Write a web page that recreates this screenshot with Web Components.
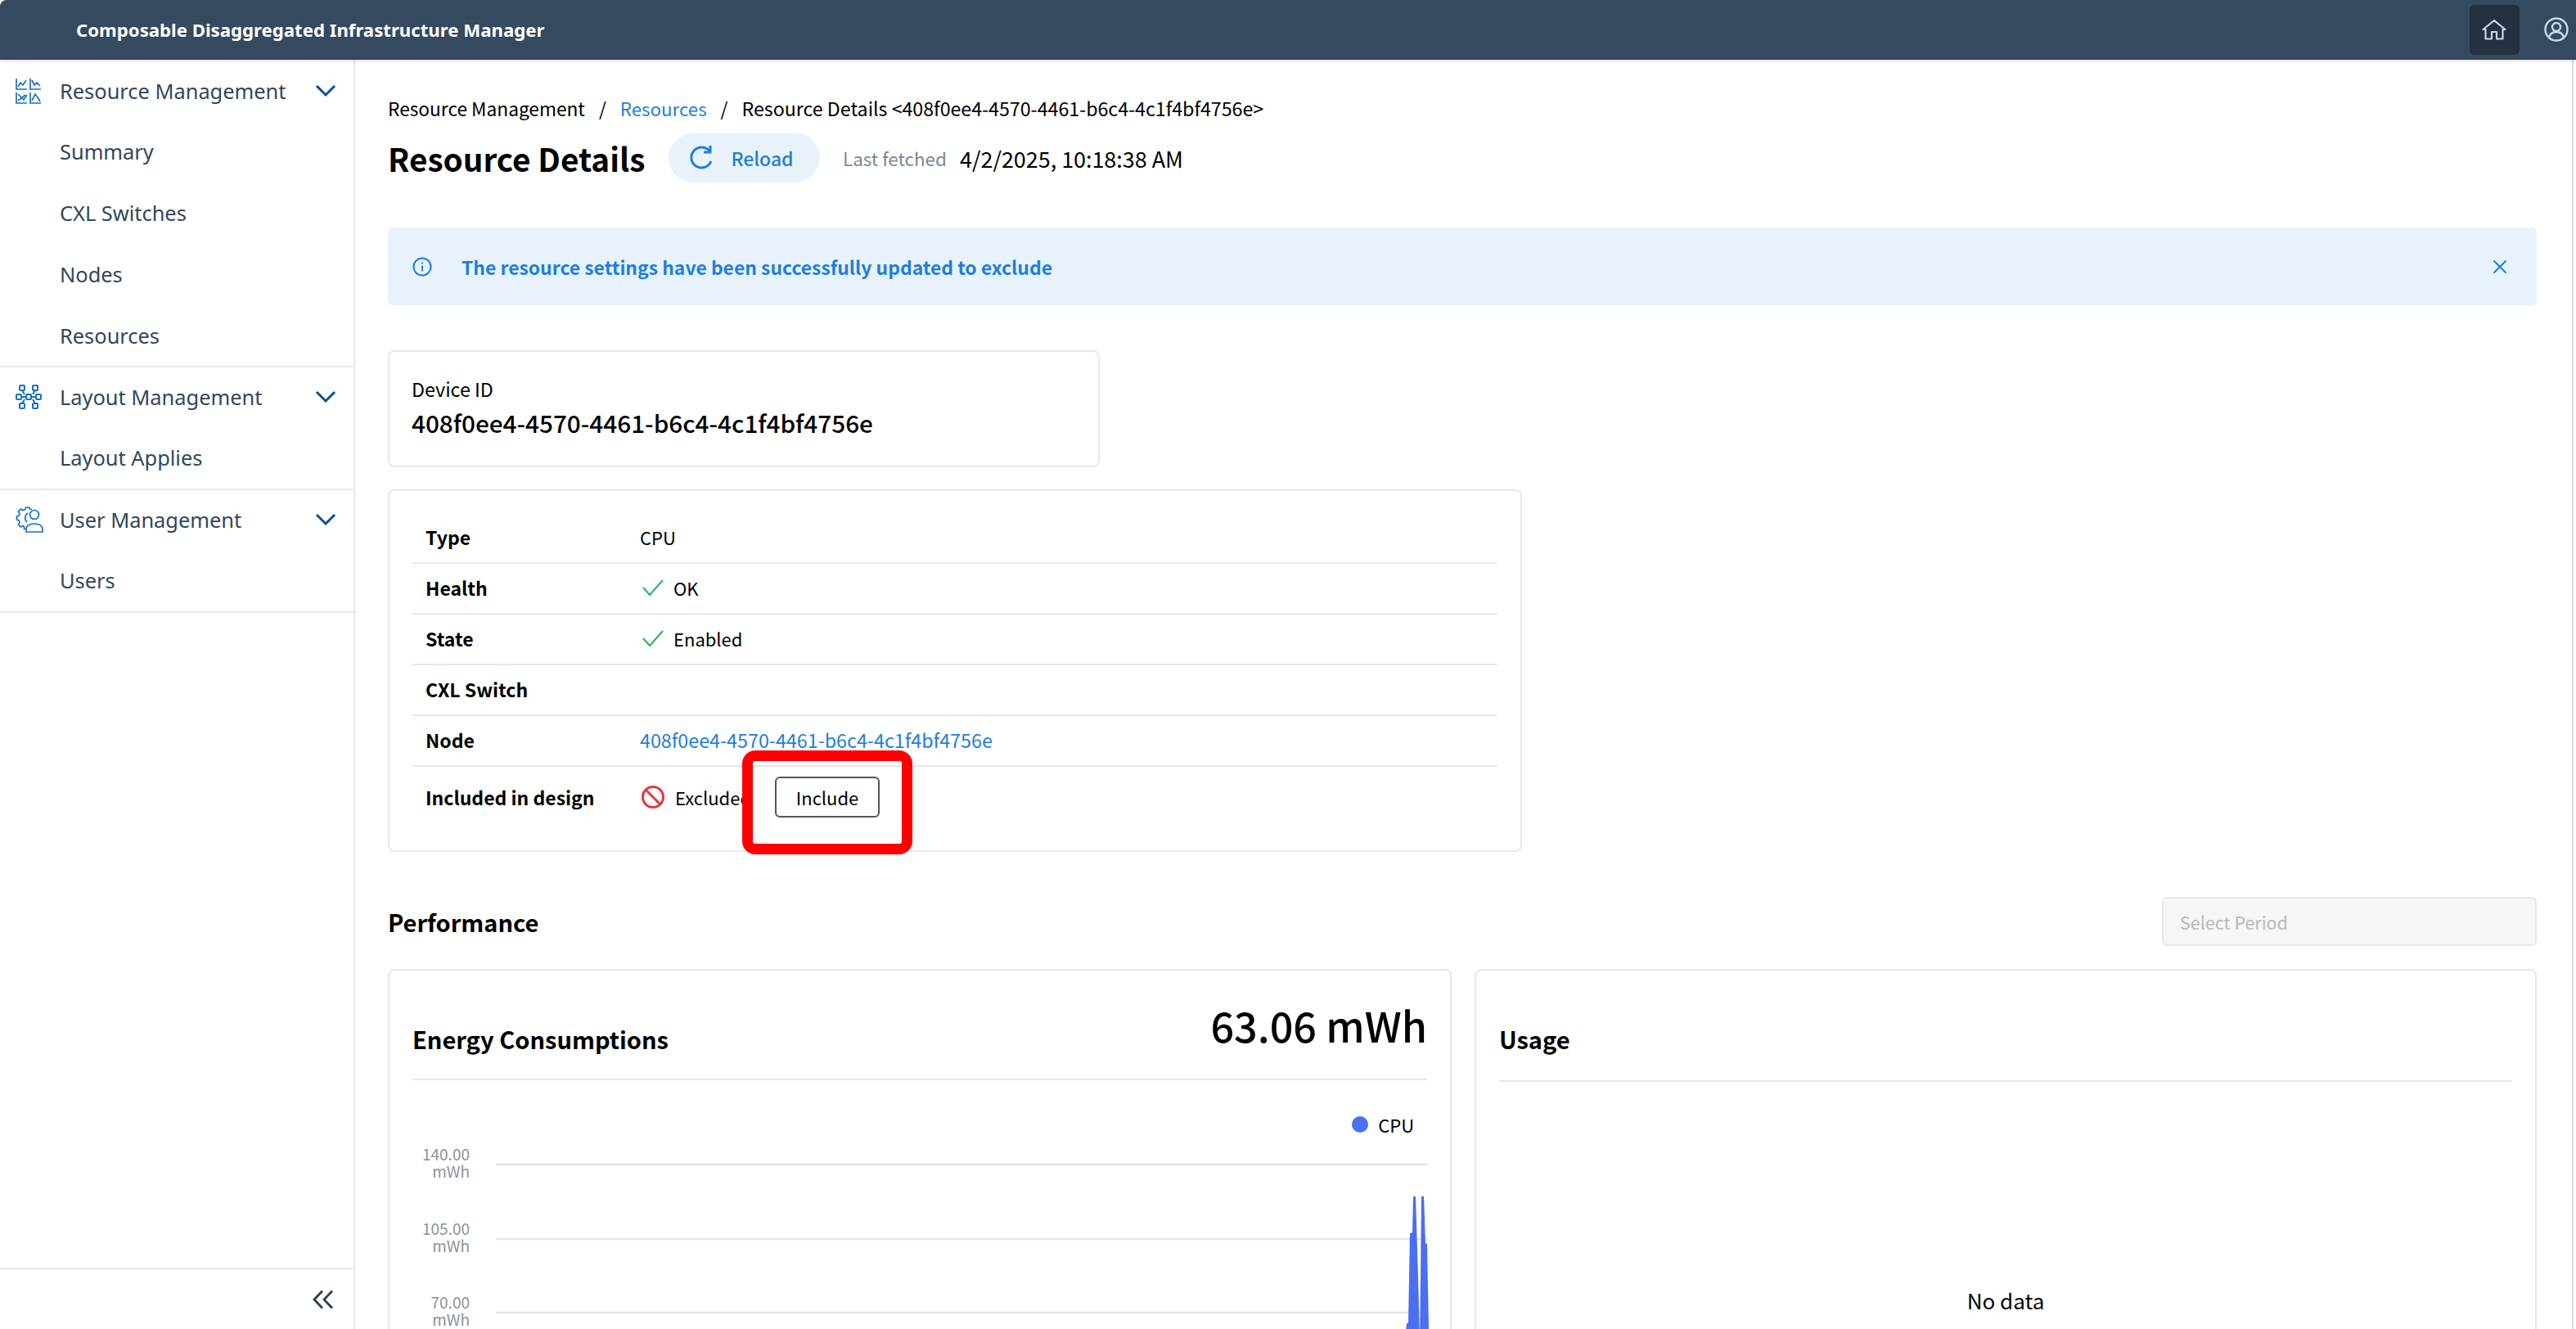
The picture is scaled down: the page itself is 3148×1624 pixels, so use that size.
<!DOCTYPE html>
<html lang="en"><head><meta charset="utf-8"><title>Resource Details</title>
<style>
html,body{margin:0;height:100%;overflow:hidden;background:#fff}
body{font-family:"Noto Sans CJK JP","Noto Sans",sans-serif;color:#000}
</style></head><body>
<cdim-app>
  <cdim-header slot="header" title-text="Composable Disaggregated Infrastructure Manager"></cdim-header>
  <cdim-sidenav slot="nav"></cdim-sidenav>
  <cdim-resource-page slot="main"></cdim-resource-page>
</cdim-app>
<script>
const def=(name,html)=>{customElements.define(name,class extends HTMLElement{
  constructor(){super();this.attachShadow({mode:'open'});if(typeof html!=='function')this.shadowRoot.innerHTML=html}
  connectedCallback(){ if(typeof html==='function'&&!this._r){this._r=1;this.shadowRoot.innerHTML=html(this)} }
})};
const ICON={
 res:`<svg width="32" height="32" viewBox="0 0 32 32" fill="none" stroke="#1b6fc0" stroke-width="1.7"><path d="M1 1v13h13M3 11l3-5 3 3 4-6M18 1v13h13M20 3l3 6 3-3 4 4M1 18v13h13M3 20l4 4 3 3 4-6M3 28l9-7M18 18v13h13M20 28l4-8 3 4 3 5"/></svg>`,
 layout:`<svg width="32" height="32" viewBox="0 0 32 32" fill="none" stroke="#1b6fc0" stroke-width="2"><rect x="5" y="2" width="6" height="6" rx="1"/><rect x="21" y="2" width="6" height="6" rx="1"/><rect x="1" y="13" width="6" height="6" rx="1"/><rect x="13" y="13" width="6" height="6" rx="1"/><rect x="25" y="13" width="6" height="6" rx="1"/><rect x="5" y="24" width="6" height="6" rx="1"/><rect x="21" y="24" width="6" height="6" rx="1"/><path d="M7 16h6M19 16h6M8 8l3 5M24 8l-3 5M8 24l3-5M24 24l-3-5"/></svg>`,
 user:`<svg width="34" height="32" viewBox="0 0 34 32" fill="none" stroke="#1b6fc0" stroke-width="1.7"><g transform="translate(-2 0)"><path d="M22 3.500l-2.500-.5-1-2h-4l-1 2.500-2.500 1-2.500-1.500-3 3 1.500 2.500-1 2.500-2.500 1v4l2.500 1 1 2.500-1.500 2.500 3 3 2.500-1.500 1.500 1v3h2"/><path d="M16 19a7 7 0 0 1 1-11"/></g><circle cx="23" cy="10" r="5.500"/><path d="M13 31v-3c0-5 4-7 10-7s10 2 10 7v3z"/></svg>`,
 chev:`<svg width="26" height="16" viewBox="0 0 26 16" fill="none" stroke="#0b4f8f" stroke-width="3"><path d="M2 2l11 11L24 2"/></svg>`,
 check:`<svg width="26" height="22" viewBox="0 0 26 22" fill="none" stroke="#2fb15a" stroke-width="2"><path d="M1 11l8 9L25 2"/></svg>`,
 ban:`<svg style="margin-left:1px" width="30" height="30" viewBox="0 0 30 30" fill="none" stroke="#e03a3e" stroke-width="3"><circle cx="15" cy="15" r="12.500"/><path d="M6 6l18 18"/></svg>`,
 reload:`<svg width="34" height="34" viewBox="0 0 34 34" fill="none" stroke="#1e7fdc" stroke-width="3"><path d="M28 21a12.500 12.500 0 1 1-2-12.500"/><path d="M27 2v8h-8"/></svg>`,
 info:`<svg width="24" height="24" viewBox="0 0 24 24" fill="none" stroke="#1e7fdc" stroke-width="2"><circle cx="12" cy="12" r="10.500"/><path d="M12 10.500v7M12 6.500v2"/></svg>`,
 close:`<svg width="18" height="18" viewBox="0 0 18 18" fill="none" stroke="#1e7fdc" stroke-width="2"><path d="M1.500 1.500l15 15M16.500 1.500l-15 15"/></svg>`,
 home:`<svg width="30" height="26" viewBox="0 0 30 26" fill="none" stroke="#c5d9ee" stroke-width="2.200" stroke-linejoin="round"><path d="M1.500 13L15 2l13.500 11h-3v11.500H18V16h-6v8.500H4.500V13z"/></svg>`,
 acct:`<svg width="30" height="30" viewBox="0 0 30 30" fill="none" stroke="#c5d9ee" stroke-width="2.400"><circle cx="15" cy="15" r="13.500"/><circle cx="15" cy="12" r="5"/><path d="M6 25c1-5 5-7 9-7s8 2 9 7"/></svg>`,
 dbl:`<svg width="26" height="24" viewBox="0 0 26 24" fill="none" stroke="#2c3e55" stroke-width="2.800"><path d="M12 1.500L2 12l10 10.500M24 1.500L14 12l10 10.500"/></svg>`
};
def('cdim-app',`<style>:host{display:grid;grid-template:73px 1fr/434px 1fr;grid-template-areas:"h h" "n m";height:100vh;width:100vw;overflow:hidden}
::slotted([slot=header]){grid-area:h}::slotted([slot=nav]){grid-area:n}::slotted([slot=main]){grid-area:m}</style>
<slot name="header"></slot><slot name="nav"></slot><slot name="main"></slot>`);
def('cdim-header',h=>`<style>:host{display:flex;align-items:center;background:#354a5f;color:#fff;padding:0 9px 0 93px;box-shadow:0 2px 4px rgba(0,0,0,.12);position:relative;z-index:1;border-bottom:1px solid #2c3e50;box-sizing:border-box;border-top-left-radius:8px}
.t{flex:1;font:700 22.2px "Noto Sans",sans-serif}
.home{width:61px;height:61px;background:#233140;border-radius:6px;display:flex;align-items:center;justify-content:center}
.home svg{margin-right:2px}
.acct{width:60px;display:flex;justify-content:flex-end}</style>
<div class="t">${h.getAttribute('title-text')||''}</div><div class="home">${ICON.home}</div><div class="acct">${ICON.acct}</div>`);
def('cdim-nav-group',g=>`<style>:host{display:block;border-bottom:2px solid #e5e7eb;font:25.4px "Noto Sans",sans-serif;color:#32465c}
.head{display:flex;align-items:center;height:var(--head,75px);padding:0 21px 0 19px}
.ic{width:54px;display:flex}.l{flex:1}
::slotted(div){height:var(--item,74.75px);display:flex;align-items:center;padding-left:73px}</style>
<div class="head"><span class="ic">${ICON[g.getAttribute('icon')]}</span><span class="l">${g.getAttribute('label')}</span>${ICON.chev}</div><slot></slot>`);
def('cdim-sidenav',`<style>:host{display:flex;flex-direction:column;border-right:2px solid #e5e7eb;box-sizing:border-box;background:#fff}
.g{flex:1}.foot{height:73px;border-top:2px solid #e5e7eb;display:flex;align-items:center;justify-content:flex-end;padding-right:24px}
cdim-nav-group.s{--head:72px;--item:76px}
</style><div class="g">
<cdim-nav-group icon="res" label="Resource Management"><div>Summary</div><div>CXL Switches</div><div>Nodes</div><div>Resources</div></cdim-nav-group>
<cdim-nav-group class="s" icon="layout" label="Layout Management"><div>Layout Applies</div></cdim-nav-group>
<cdim-nav-group class="s" icon="user" label="User Management"><div>Users</div></cdim-nav-group>
</div><div class="foot">${ICON.dbl}</div>`);
def('cdim-card',`<style>:host{display:block;box-sizing:border-box;border:2px solid #e5e7eb;border-radius:8px;background:#fff}</style><slot></slot>`);
def('cdim-row',r=>`<style>:host{display:flex;align-items:center;height:var(--h,62px);box-sizing:border-box;border-bottom:2px solid #e5e7eb;font-size:22px;padding-left:16px}
:host([last]){border-bottom:0}
.k{width:262px;font-weight:700;font-size:23px;padding-bottom:2px}.v{display:flex;align-items:center;gap:12px;padding-bottom:2px}
::slotted(svg){margin-left:3px}</style>
<div class="k">${r.getAttribute('k')}</div><div class="v"><slot></slot></div>`);
def('cdim-chart',`<style>:host{display:block;position:relative;padding-top:25px}
svg{display:block;position:absolute;left:0;top:0}
.leg{display:flex;justify-content:flex-end;align-items:center;gap:12px;font-size:22px;padding-right:16px;height:58px;position:relative;z-index:1}
.dot{width:20px;height:20px;border-radius:50%;background:#4a6ff0}
.ax{position:absolute;left:0;width:70px;text-align:right;font-size:19px;line-height:21px;color:#8a939c}
</style><div class="leg"><span class="dot"></span>CPU</div>
<svg width="1270" height="320"><g stroke="#e3e5e8" stroke-width="2.500"><path d="M102 103H1241M102 194H1241M102 284H1241"/></g>
<path d="M1213 316L1215 297L1217 297L1219 187L1222 186L1223 142L1226 142L1229 240L1231 316L1232 240L1233 142L1236 142L1238 199L1240 200L1242 304L1244 316Z" fill="#4a6ff0"/></svg>
<div class="ax" style="top:79px">140.00<br>mWh</div><div class="ax" style="top:170px">105.00<br>mWh</div><div class="ax" style="top:260px">70.00<br>mWh</div>`);
def('cdim-resource-page',`<style>:host{display:block;box-sizing:border-box;padding:0 48px 0 40px;position:relative;overflow:hidden}
a{color:#1e7fdc}
.crumb{display:flex;gap:17px;align-items:center;font-size:22.7px;height:30px;margin-top:44px}
.crumb a{font-size:22.3px}.crumb .d{font-size:23.2px}
.titlebar{display:flex;align-items:center;height:60px;margin-top:16px}
h1{margin:0;font-size:38.7px;font-weight:700;width:343px;line-height:56px}
.reload{display:flex;align-items:center;justify-content:center;gap:18px;width:185px;height:60px;border-radius:30px;background:#e8f2fb;color:#1e7fdc;font-weight:500;font-size:23px;box-sizing:border-box;padding-right:6px}
.reload svg{margin-left:-2px}
.last{color:#7c8791;font-size:22.4px;margin-left:28px;width:143px}.date{font-size:26.9px}
.alert{display:flex;align-items:center;height:95px;margin-top:55px;background:#e8f2fc;border-radius:6px;color:#1e7fdc;font-weight:700;font-size:22.9px;padding:0 36px 0 30px}
.alert .m{flex:1;margin-left:36px}
.dev{width:870px;height:143px;margin-top:55px;padding:31px 27px 0;}
.dev .a{font-size:23.3px;line-height:28px}.dev .b{font-size:29.7px;line-height:38px;font-weight:500;margin-top:9px}
.det{width:1386px;height:443px;margin-top:27px;padding:27px 28px 0}
.det a{font-size:23.3px}
.btn{height:50px;width:128px;box-sizing:border-box;border:2px solid #555;border-radius:6px;display:flex;align-items:center;justify-content:center;font-size:22px;margin-left:17px;background:#fff}
.perf{display:flex;align-items:center;justify-content:space-between;height:60px;margin-top:55px}
h2{margin:0;font-size:29px;font-weight:700}
.sel{width:458px;height:60px;box-sizing:border-box;background:#f5f6f7;border:2px solid #e5e7eb;border-radius:6px;color:#b4bac0;font-size:21.500px;display:flex;align-items:center;padding-left:20px}
.cards{display:grid;grid-template-columns:1300px 1298px;gap:28px;margin-top:28px}
.c{height:600px;padding:0 28px;}
.ch{display:flex;justify-content:space-between;align-items:flex-end;height:132px;border-bottom:2px solid #e5e7eb}
.ch.u{height:134px}
.ch h3{margin:0 0 28px;font-size:29px;font-weight:700}.big{font-size:50.3px;font-weight:500;line-height:66px;margin-bottom:33px}
.nd{text-align:center;font-size:26px;margin-top:248px}
.mark{position:absolute;left:473px;top:844px;width:208px;height:127px;box-sizing:border-box;border:13px solid #f00;border-radius:16px;pointer-events:none}
.scroll{position:absolute;right:0;top:0;bottom:0;width:3px;background:#fff;border-left:2px solid #dcdfe3}
</style>
<div class="crumb"><span>Resource Management</span><span>/</span><a>Resources</a><span>/</span><span class="d">Resource Details &lt;408f0ee4-4570-4461-b6c4-4c1f4bf4756e&gt;</span></div>
<div class="titlebar"><h1>Resource Details</h1><div class="reload">${ICON.reload}<span>Reload</span></div><span class="last">Last fetched</span><span class="date">4/2/2025, 10:18:38 AM</span></div>
<div class="alert">${ICON.info}<span class="m">The resource settings have been successfully updated to exclude</span>${ICON.close}</div>
<cdim-card class="dev"><div class="a">Device ID</div><div class="b">408f0ee4-4570-4461-b6c4-4c1f4bf4756e</div></cdim-card>
<cdim-card class="det">
 <cdim-row k="Type">CPU</cdim-row>
 <cdim-row k="Health">${ICON.check}OK</cdim-row>
 <cdim-row k="State">${ICON.check}Enabled</cdim-row>
 <cdim-row k="CXL Switch"></cdim-row>
 <cdim-row k="Node"><a>408f0ee4-4570-4461-b6c4-4c1f4bf4756e</a></cdim-row>
 <cdim-row k="Included in design" last style="--h:76px">${ICON.ban}Excluded<span class="btn">Include</span></cdim-row>
</cdim-card>
<div class="perf"><h2>Performance</h2><div class="sel">Select Period</div></div>
<div class="cards">
 <cdim-card class="c"><div class="ch"><h3>Energy Consumptions</h3><span class="big">63.06 mWh</span></div><cdim-chart></cdim-chart></cdim-card>
 <cdim-card class="c"><div class="ch u"><h3 style="margin-bottom:30px">Usage</h3></div><div class="nd">No data</div></cdim-card>
</div>
<div class="mark"></div><div class="scroll"></div>`);
</script></body></html>
